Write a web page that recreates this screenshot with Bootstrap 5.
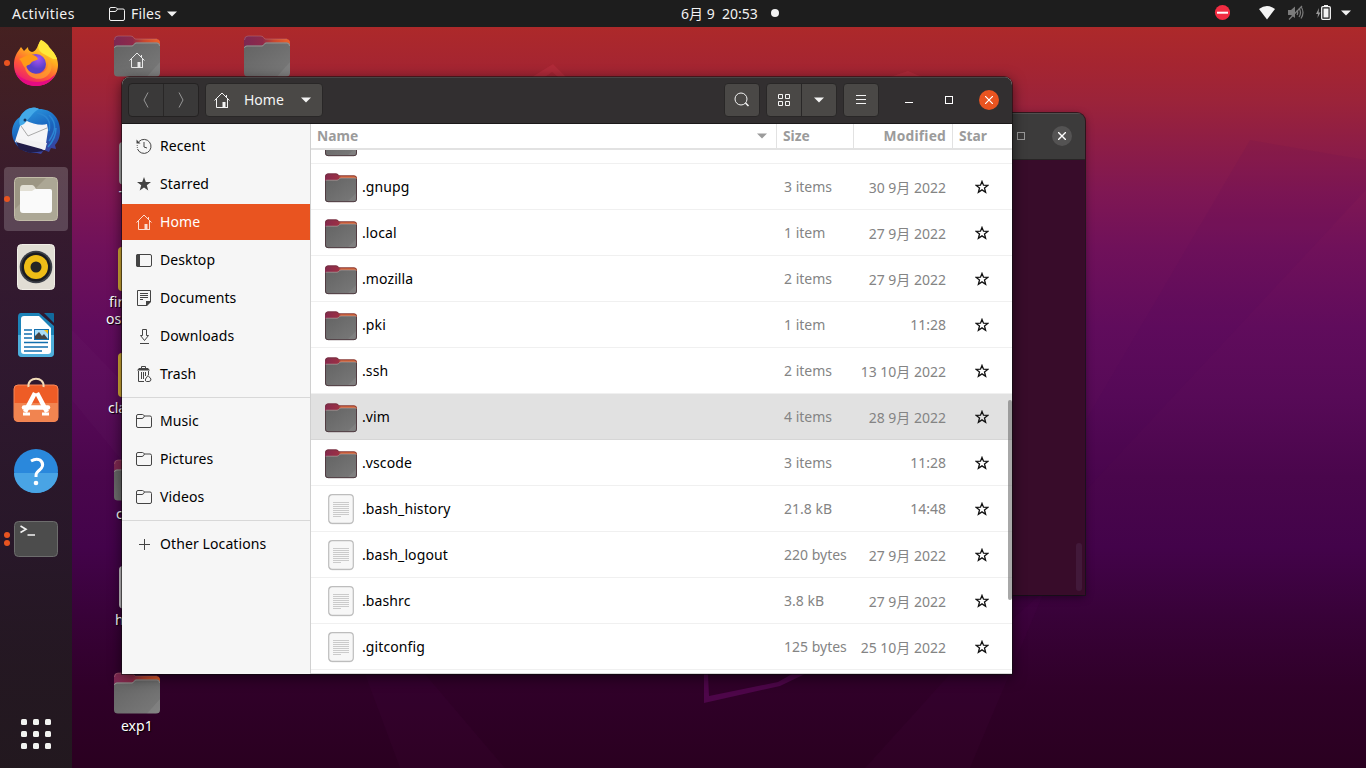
<!DOCTYPE html>
<html lang="en">
<head>
<meta charset="utf-8">
<title>Home</title>
<meta name="viewport" content="width=device-width, initial-scale=1">
<link href="https://cdn.jsdelivr.net/npm/bootstrap@5.3.0/dist/css/bootstrap.min.css" rel="stylesheet">
<style>
body{font-family:"Noto Sans","Noto Sans CJK JP",sans-serif;font-size:14px;line-height:20px;color:#111;height:768px;background:#2c001e}
svg{display:block;flex:none}
.topbar{height:27px;background:#1d1d1d;color:#f2f2f2;flex:none}
.topbar .clock{left:681px;top:4px}
.topbar .first{margin-left:12px;letter-spacing:.45px}
.desk{background:linear-gradient(180deg,#ad292a 0,#a52531 38px,#9b233a 75px,#8b1c48 125px,#7f1753 165px,#70115a 220px,#600c5c 300px,#570a57 370px,#4a064c 450px,#43034a 520px,#380238 590px,#300029 660px,#2a0020 741px)}
.dock{width:72px;background:linear-gradient(180deg,rgba(29,29,29,.72),rgba(32,29,32,.74) 50%,rgba(33,29,31,.84));gap:4px;padding:4px;z-index:1}
.dock-item{width:64px;height:64px;border-radius:4px}
.dock-item.on{background:rgba(255,255,255,.19)}
.pip{width:6px;height:6px;border-radius:50%;background:#e95420}
.pips{left:0;top:0;height:64px;width:6px;gap:2.5px}
.wall{left:0;top:0}
.icon-slot{position:absolute;color:#fff;text-shadow:1px 1px 1px #000;line-height:17px}
.win{position:absolute;border-radius:8px 8px 0 0;overflow:hidden}
.term{left:277px;top:86px;width:736px;height:482px;background:#380c2a;box-shadow:0 2px 9px rgba(0,0,0,.45),0 0 0 1px rgba(25,25,25,.75)}
.term-head{height:47px;background:#3c3b3b;border-bottom:1px solid #272525;box-shadow:inset 0 1px #504e4e;padding-right:13px;gap:25px}
.round-x{width:20px;height:20px;border-radius:50%;background:#545353}
.thumb-dark{right:3px;bottom:4px;width:6px;height:48px;border-radius:3px;background:#42193a}
.files{left:50px;top:50px;width:890px;height:597px;background:#fff;box-shadow:0 3px 14px rgba(0,0,0,.6),0 0 0 1px rgba(20,20,20,.55)}
.files-head{height:47px;background:#322f30;border-bottom:1px solid #1b191a;box-shadow:inset 0 1px #474445;padding:0 13px 0 6px;color:#f4f4f4}
.tool{height:34px;background:#4a4846;border-radius:4px;border:1px solid #292727}
.tool.off{background:#3a3939;border-color:#242222}
.tool .split{border-left:1px solid #292727}
.side{width:189px;background:#f6f6f6;border-right:1px solid #d0d0d0;padding-top:4px}
.side-item{height:36px;margin-bottom:2px;padding-left:14px;gap:8px;color:#000;letter-spacing:.1px}
.side-item svg{color:#444}
.side-item.on{background:#e95420;color:#fff}
.side-item.on svg{color:#fbdccf}
.side-line{height:1px;background:#d8d8d8;margin:5px 0}
.heads{height:26px;border-bottom:2px solid #e2e2e2;font-weight:700;color:#9b9b9b;flex:none;font-size:13.8px;line-height:24px}
.heads>div,.entry>div{flex:none}
.c-name{width:465px}.c-size{width:77px}.c-mod{width:99px}.c-star{width:60px}
.heads .c-size,.heads .c-mod,.heads .c-star{border-left:1px solid #e2e2e2}
.entry{height:46px;border-bottom:1px solid #f0f0f0}
.entry.on{background:#e1e1e1;border-color:#d6d6d6}
.entry .c-name{color:#000;letter-spacing:.1px}
.entry .c-name svg{position:relative;top:1px}
.entry .c-size,.entry .c-mod{color:#848484}
.stub{height:14px;border-bottom:1px solid #f0f0f0;overflow:hidden;flex:none}
.thumb{right:0;top:323px;width:4px;height:200px;border-radius:2px;background:rgba(110,110,110,.6)}
</style>
</head>
<body class="d-flex flex-column overflow-hidden m-0">

<svg width="0" height="0" class="position-absolute" aria-hidden="true">
<defs>
<linearGradient id="gBack"><stop offset="0" stop-color="#7c2853"/><stop offset=".4" stop-color="#8e2a4a"/><stop offset=".65" stop-color="#c8472f"/><stop offset="1" stop-color="#f0622b"/></linearGradient>
<linearGradient id="gFront" x2="1" y2="1"><stop offset="0" stop-color="#636363"/><stop offset="1" stop-color="#7a7a7a"/></linearGradient>
<linearGradient id="gBack2"><stop offset="0" stop-color="#842a4d"/><stop offset=".42" stop-color="#9b3045"/><stop offset=".5" stop-color="#d8653a"/><stop offset="1" stop-color="#e0662f"/></linearGradient>
<linearGradient id="gFx" x1=".8" y1="0" x2=".3" y2="1"><stop offset="0" stop-color="#fff44f"/><stop offset=".35" stop-color="#ffb01f"/><stop offset=".65" stop-color="#ff5a36"/><stop offset="1" stop-color="#e8107c"/></linearGradient>
<radialGradient id="gOrb" cx=".6" cy=".25"><stop offset="0" stop-color="#a855f2"/><stop offset="1" stop-color="#5a3fc8"/></radialGradient>
<linearGradient id="gTb" x1=".3" x2=".7" y1="0" y2="1"><stop offset="0" stop-color="#2b9ae0"/><stop offset=".5" stop-color="#1a63bd"/><stop offset="1" stop-color="#3c3f9b"/></linearGradient>
<symbol id="deskFolder" viewBox="0 0 46 42"><path d="M0 5Q0 1 4 1H17Q19 1 21 4H42Q46 4 46 8V20H0Z" fill="url(#gBack)"/><path d="M.5 5Q.5 1 4 1H17Q19 1 21 4H43" fill="none" stroke="#c08a8a" stroke-opacity=".6" stroke-width=".7"/><path d="M0 13Q0 10.500 3 10.500H18C20 10.500 20 7.500 22 7.500H43Q46 7.500 46 11V38Q46 41.500 42 41.500H4Q0 41.500 0 38Z" fill="url(#gFront)"/><path d="M.5 13Q.5 11 3 11H18C20 11 20 8 22 8H43Q45.500 8 45.500 11" fill="none" stroke="#a39d9d" stroke-width=".8"/><path d="M46 27V38Q46 41.500 42 41.500H33Z" fill="#fff" opacity=".07"/></symbol>
<symbol id="folder" viewBox="0 0 32 30"><path d="M0 4Q0 .5 3 .5H11Q13 .5 14 2.500H29Q32 2.500 32 5.500V14H0Z" fill="url(#gBack2)"/><path d="M.5 4Q.5 .9 3 .9H11Q13 .9 14 2.800H29Q31.500 2.800 31.500 5.500" fill="none" stroke="#6d3440" stroke-width=".8"/><path d="M0 9Q0 7 2 7H12C14 7 14 5 16 5H30Q32 5 32 7V26Q32 29 29 29H3Q0 29 0 26Z" fill="url(#gFront)"/><path d="M1 7.200H12C14 7.200 14 5 16 5H31" fill="none" stroke="#b09a98" stroke-width=".7"/><path d="M.5 8V26Q.5 28.700 3 28.700H29Q31.500 28.700 31.500 26V6" fill="none" stroke="#513c42" stroke-width="1"/><path d="M31 20V28H23Z" fill="#fff" opacity=".06"/></symbol>
<symbol id="sheet" viewBox="0 0 26 31"><rect x=".8" y="1.200" width="24.400" height="29" rx="3.500" fill="#d7d7d7"/><rect x=".7" y=".7" width="24.600" height="28.600" rx="3.500" fill="#f7f7f7" stroke="#bdbdbd" stroke-width="1.200"/><path d="M5 8.500H21M5 10.500H21M5 12.500H21M5 14.500H21M5 16.500H21M5 18.500H21M5 20.500H21M5 22.500H13" stroke="#cbcbcb"/></symbol>
<symbol id="house" viewBox="0 0 16 16"><path d="M.5 8.500 8 1l7.500 7.500M2.500 7V15.500H9M13.500 7V15.500M12.500 3V5.500" fill="none" stroke="currentColor"/><path d="M8.500 10H11.500V16H8.500Z" fill="currentColor"/><path d="M11 15.500H14" stroke="currentColor"/></symbol>
<symbol id="dir" viewBox="0 0 16 16"><path d="M.5 3Q.5 1.500 2 1.500H6.500Q7.500 1.500 8.500 3H14Q15.500 3 15.500 4.500V13Q15.500 14.500 14 14.500H2Q.5 14.500 .5 13ZM.5 5.500H6Q7.500 5.500 8.500 3" fill="none" stroke="currentColor"/></symbol>
<symbol id="starLine" viewBox="0 0 14 14"><path d="M7 1.400 8.500 5.200 12.800 5.400 9.500 8 10.600 12.300 7 9.900 3.400 12.300 4.500 8 1.200 5.400 5.500 5.200Z" fill="none" stroke="#111" stroke-width="1.300"/></symbol>
<symbol id="down" viewBox="0 0 10 6"><path d="M0 .5H10L5 5.500Z" fill="currentColor"/></symbol>
</defs>
</svg>

<header class="topbar position-relative d-flex align-items-center">
  <span class="first">Activities</span>
  <div class="position-absolute d-flex align-items-center" style="left:109px;top:4px">
    <svg width="16" height="16"><use href="#dir"/></svg><span style="margin:0 6px;letter-spacing:.2px">Files</span><svg width="10" height="6"><use href="#down"/></svg>
  </div>
  <div class="clock position-absolute d-flex align-items-center" style="white-space:pre">6月 9  20:53<svg style="margin-left:13px;margin-top:-2px" width="8" height="8"><circle cx="4" cy="4" r="4" fill="#f2f2f2"/></svg></div>
  <div class="position-absolute d-flex align-items-center" style="left:1214px;top:4px">
    <svg width="16" height="18"><circle cx="8.500" cy="8.500" r="7.600" fill="#f22c42"/><rect x="3" y="7.700" width="11" height="2" fill="#fff"/></svg>
    <svg style="margin-left:29px" width="16" height="18"><path d="M0 5Q8-.8 16 5L8 15.500Z" fill="#f4f4f4"/></svg>
    <svg style="margin-left:13px" width="16" height="18" fill="none" stroke="#7b7b7b" stroke-width="1.200"><path d="M0 6H3L7 2.500V14L3 11H0Z" fill="#7b7b7b" stroke="none"/><path d="M9 6Q10.500 8.500 9 11M11 4Q14 8.500 11 13M13 2.500Q17 8.500 13 14.500M1 15.500 14 2"/></svg>
    <svg style="margin-left:12px" width="16" height="18"><path d="M3 4 0 10H2L1.500 14 4.500 8.500H2.600Z" fill="#999"/><path d="M8 1H12V3H8Z" fill="#f4f4f4"/><rect x="5.700" y="2.700" width="8.600" height="12.600" rx="1" fill="none" stroke="#f4f4f4" stroke-width="1.300"/><rect x="7.500" y="4.500" width="5" height="9" fill="#f4f4f4"/></svg>
    <svg style="margin-left:9px" width="10" height="6"><use href="#down"/></svg>
  </div>
</header>

<main class="desk d-flex flex-grow-1 position-relative overflow-hidden">
  <svg class="wall position-absolute" width="1366" height="741" viewBox="0 27 1366 741">
    <path d="M72 330 130 390V470L72 400Z" fill="#fff" opacity=".015"/>
    <path d="M365 674H425L505 768H400ZM950 674 1045 590 970 768H865Z" fill="#8a1688" opacity=".045"/>
    <path d="M1366 160V190L1086 490V420L1250 140Z" fill="#3c0060" opacity=".05"/>
    <path d="M532 77 553 64 566 77H558L552 72 545 77ZM890 77 908 71 922 77Z" fill="#bb3040" opacity=".5"/>
    <path d="M704 674V703L780 686 805 674H792L778 682 709 696 708 674ZM780 686 781 674" fill="#4d0649"/>
  </svg>

  <nav class="dock d-flex flex-column flex-shrink-0">
    <div class="dock-item position-relative d-flex align-items-center justify-content-center">
      <div class="pips position-absolute d-flex flex-column justify-content-center"><i class="pip"></i></div>
      <svg width="46" height="48" viewBox="0 0 46 48"><path d="M28 1C33 4 34 8 37 10 42 14 45 20 45 26 45 38 35 47 23 47S1 38 1 26C1 19 3 15 6 11L8 8 11 12 15 8C15 11 16 12 19 13 24 13 25 4 28 1Z" fill="url(#gFx)"/><path d="M28 1C24 6 25 11 29 14L40 20 44 20C42 13 37 10 35 6 34 5 31 2 28 1Z" fill="#ffe83b"/><circle cx="23" cy="25" r="10" fill="url(#gOrb)"/><path d="M6 20 15 16C20 15 24 17 25 20 24 22 20 21 18 24 16 27 12 26 12 29 9 25 9 22 6 20Z" fill="#ff9a18"/><path d="M13 26C14 35 26 38 33 31 37 26 35 20 31 16 40 20 41 31 34 37 26 43 14 39 12 29Z" fill="#ffa52c" opacity=".7"/><path d="M2 32C7 43 33 49 43 34 38 45 29 47 23 47 12 47 5 41 2 32Z" fill="#e50b82"/></svg>
    </div>
    <div class="dock-item d-flex align-items-center justify-content-center">
      <svg width="50" height="50" viewBox="0 0 50 50"><path d="M9 11C13 3 21 0 28 3 41 3 49 12 49 25 49 31 47 36 44 39L45 43 40 42 38 46 33 44 30 48 26 47C13 48 2 40 1 27 1 20 4 14 9 11Z" fill="url(#gTb)"/><path d="M10 17 14 14C21 18 31 20 36 18L37 24 34 44 4 36 5 32Z" fill="#f5f5f7"/><path d="M10 20 17 30 36 22" fill="none" stroke="#aaa" stroke-width="1"/><path d="M9 11C14 3 22-1 28 3 22 6 19 12 13 18L9 20C8 17 8 14 9 11Z" fill="#43a9e8"/><circle cx="14" cy="14" r="1.500" fill="#17345c"/><path d="M5 35 8 43 19 47 33 45 26 39Z" fill="#211c48"/><path d="M5 36 8 33 36 37 34 44Z" fill="#f1f1f3"/><path d="M26 7C37 9 40 16 38 25M38 9C46 17 45 25 38 35M45 22Q45 32 37 41" fill="none" stroke="#2c86d3" stroke-width="1.500"/></svg>
    </div>
    <div class="dock-item on position-relative d-flex align-items-center justify-content-center">
      <div class="pips position-absolute d-flex flex-column justify-content-center"><i class="pip"></i></div>
      <svg width="44" height="44"><rect x=".5" y=".5" width="43" height="43" rx="4" fill="#9c9683" stroke="#c3bda9"/><path d="M1 32 32 1H43V43H1Z" fill="#b8b3a2" opacity=".6"/><path d="M6 12Q6 8 9 8H18Q20 8 22 12V16H6Z" fill="#e2dfd4"/><path d="M6 14H18L21 12H36Q38 12 38 14V33Q38 36 35 36H9Q6 36 6 33Z" fill="#fafafa"/></svg>
    </div>
    <div class="dock-item d-flex align-items-center justify-content-center">
      <svg width="38" height="46"><rect x=".5" y=".5" width="37" height="45" rx="4" fill="#e1ddd4" stroke="#f1eee7"/><circle cx="19" cy="23" r="16.300" fill="#3d4048"/><circle cx="19" cy="23" r="14.500" fill="#1b1c21"/><circle cx="19" cy="23" r="12" fill="#eebd17"/><circle cx="19" cy="23" r="5.500" fill="#252525"/></svg>
    </div>
    <div class="dock-item d-flex align-items-center justify-content-center">
      <svg width="38" height="46"><path d="M4 1H22L37 14V41Q37 45 33 45H5Q1 45 1 41V5Q1 1 4 1Z" fill="#1c83b8"/><path d="M1 23H37V41Q37 45 33 45H5Q1 45 1 41Z" fill="#4eaedb"/><path d="M27 1H36Q37 1 37 2V11Z" fill="#126a9d"/><path d="M7 4H22L34 16V39Q34 42 31 42H7Q4 42 4 39V7Q4 4 7 4Z" fill="#fff"/><path d="M7 18H15M7 22H15M7 26H15M7 30.500H31M7 35H31M7 39H25" stroke="#126fae" stroke-width="1.700"/><rect x="17.500" y="17.500" width="14" height="10" fill="#a7dcf8" stroke="#126fae"/><path d="M18 27V24L22 20 25 24 27 22 31 27Z" fill="#444"/><path d="M27 18H31V22Z" fill="#f5c21b"/></svg>
    </div>
    <div class="dock-item d-flex align-items-start justify-content-center pt-1">
      <svg style="margin-top:2px" width="46" height="46" viewBox="0 -1 46 46"><rect x="1" y="7" width="44" height="36.500" rx="4" fill="#ee5c26" stroke="#f78758"/><path d="M1 25H45V39.500Q45 43.500 41 43.500H5Q1 43.500 1 39.500Z" fill="#f18450"/><path d="M15.500 9C14-2 32-2 30.500 9" fill="none" stroke="#f2dcb8" stroke-width="2"/><path d="M22 15 12 34M24 15 34 34" fill="none" stroke="#fff" stroke-width="4.500"/><path d="M11 29.500H35" stroke="#fff" stroke-width="4.500" stroke-linecap="round"/><path d="M10 36H17M29 36H36" stroke="#fff" stroke-width="3"/></svg>
    </div>
    <div class="dock-item d-flex align-items-center justify-content-center">
      <svg width="44" height="44"><circle cx="22" cy="22" r="22" fill="#2a88dc"/><path d="M0 24H44A22 20 0 0 1 0 24" fill="#49a4e5"/><path d="M17 12Q22 9 26 11C31 15 28 19 25 21.500 22 24 22 25 22 28" fill="none" stroke="#fff" stroke-width="3"/><circle cx="22" cy="34" r="2.300" fill="#fff"/></svg>
    </div>
    <div class="dock-item position-relative d-flex align-items-center justify-content-center">
      <div class="pips position-absolute d-flex flex-column justify-content-center"><i class="pip"></i><i class="pip"></i></div>
      <svg width="44" height="36"><rect x=".5" y=".5" width="43" height="35" rx="4" fill="#4c4c4c" stroke="#6d6d6d"/><path d="M6.500 5 12 8.300 6.500 11.500M13.500 14H21" fill="none" stroke="#f2f2f2" stroke-width="1.600"/></svg>
    </div>
    <div class="dock-item mt-auto d-flex align-items-center justify-content-center" style="margin-bottom:-2px">
      <svg width="30" height="30" fill="#f2f2f0"><g id="dots"><rect width="6" height="6" rx="1.500"/><rect x="12" width="6" height="6" rx="1.500"/><rect x="24" width="6" height="6" rx="1.500"/></g><use href="#dots" y="12"/><use href="#dots" y="24"/></svg>
    </div>
  </nav>

  <section class="position-relative flex-grow-1">
    <div class="icon-slot" style="left:42px;top:8px"><svg width="46" height="42"><use href="#deskFolder"/><use href="#house" x="15" y="17" width="16" height="16" opacity=".85"/></svg></div>
    <div class="icon-slot" style="left:172px;top:8px"><svg width="46" height="42"><use href="#deskFolder"/></svg></div>
    <div class="icon-slot" style="left:47px;top:115px"><svg width="36" height="43"><rect width="36" height="42.500" rx="4" fill="#aaa"/></svg></div>
    <div class="icon-slot" style="left:47px;top:160px">T</div>
    <div class="icon-slot" style="left:46px;top:220px"><svg width="38" height="44"><rect width="38" height="44" rx="4" fill="#d8af37"/></svg></div>
    <div class="icon-slot" style="left:37px;top:266px">fir</div>
    <div class="icon-slot" style="left:34px;top:283px">os</div>
    <div class="icon-slot" style="left:46px;top:326px"><svg width="38" height="44"><rect width="38" height="44" rx="4" fill="#d8af37"/></svg></div>
    <div class="icon-slot" style="left:36px;top:372px">cla</div>
    <div class="icon-slot" style="left:42px;top:432px"><svg width="46" height="42"><use href="#deskFolder"/></svg></div>
    <div class="icon-slot" style="left:44px;top:478px">c</div>
    <div class="icon-slot" style="left:47px;top:539px"><svg width="36" height="43"><rect width="36" height="42.500" rx="4" fill="#c8c4c8"/></svg></div>
    <div class="icon-slot" style="left:43px;top:584px">h</div>
    <div class="icon-slot" style="left:42px;top:645px"><svg width="46" height="42"><use href="#deskFolder"/></svg></div>
    <div class="icon-slot" style="left:49px;top:690px">exp1</div>

    <div class="win term">
      <div class="term-head d-flex align-items-center justify-content-end">
        <svg width="9" height="9" style="margin-right:1px"><rect x=".5" y=".5" width="7" height="7" fill="none" stroke="#999"/></svg>
        <div class="round-x d-flex align-items-center justify-content-center"><svg width="8" height="8"><path d="M0 0 8 8M8 0 0 8" stroke="#fff" stroke-width="1.400"/></svg></div>
      </div>
      <div class="thumb-dark position-absolute"></div>
    </div>

    <div class="win files d-flex flex-column">
      <div class="files-head d-flex align-items-center flex-shrink-0">
        <div class="tool off d-flex align-items-stretch" style="width:71px">
          <div class="d-flex align-items-center justify-content-center flex-fill"><svg width="6" height="16"><path d="M5 .5 1 8 5 15.500" fill="none" stroke="#969696"/></svg></div>
          <div class="split d-flex align-items-center justify-content-center flex-fill"><svg width="6" height="16"><path d="M1 .5 5 8 1 15.500" fill="none" stroke="#969696"/></svg></div>
        </div>
        <div class="tool d-flex align-items-center" style="width:118px;margin-left:6px;padding-left:8px">
          <svg width="16" height="16"><use href="#house"/></svg><span style="margin-left:14px;width:41px">Home</span><svg class="ms-3" width="10" height="6"><use href="#down"/></svg>
        </div>
        <div class="tool ms-auto d-flex align-items-center justify-content-center" style="width:36px"><svg width="16" height="16"><circle cx="7" cy="7" r="6" fill="none" stroke="#f4f4f4"/><path d="M11.500 11 14.500 14" stroke="#f4f4f4" stroke-width="1.600"/></svg></div>
        <div class="tool d-flex" style="width:71px;margin-left:6px">
          <div class="d-flex align-items-center justify-content-center" style="width:34px"><svg width="12" height="12" fill="none" stroke="#f4f4f4"><path d="M.5.5H4.500V4.500H.5ZM7.500.5H11.500V4.500H7.500ZM.5 7.500H4.500V11.500H.5ZM7.500 7.500H11.500V11.500H7.500Z"/></svg></div>
          <div class="split flex-fill d-flex align-items-center justify-content-center"><svg width="10" height="6"><use href="#down"/></svg></div>
        </div>
        <div class="tool d-flex align-items-center justify-content-center" style="width:36px;margin-left:6px"><svg width="10" height="10"><path d="M0 .5H10M0 4.500H10M0 8.500H10" stroke="#f4f4f4"/></svg></div>
        <svg style="margin-left:26px" width="8" height="8"><path d="M0 6.500H8" stroke="#fff"/></svg>
        <svg style="margin-left:32px" width="8" height="8"><rect x=".5" y=".5" width="7" height="7" fill="none" stroke="#fff"/></svg>
        <div class="round-x d-flex align-items-center justify-content-center" style="margin-left:26px;background:#e95420"><svg width="8" height="8"><path d="M0 0 8 8M8 0 0 8" stroke="#fff" stroke-width="1.200"/></svg></div>
      </div>

      <div class="d-flex flex-grow-1 overflow-hidden">
        <div class="side flex-shrink-0">
          <div class="side-item d-flex align-items-center"><svg width="16" height="16" fill="none" stroke="currentColor"><path d="M3 3.500A7 7 0 1 1 1.500 11" /><path d="M1.500 10Q1 8.500 1.300 7" stroke-dasharray="1 1"/><path d="M8 4V9L11 10"/><path d="M.5 1.500V5.500H4.500Z" fill="currentColor" stroke="none"/></svg>Recent</div>
          <div class="side-item d-flex align-items-center"><svg width="16" height="16"><path d="M8 1 9.800 6H15L10.800 9.200 12.300 14.500 8 11.400 3.700 14.500 5.200 9.200 1 6H6.200Z" fill="currentColor"/></svg>Starred</div>
          <div class="side-item on d-flex align-items-center"><svg width="16" height="16"><use href="#house"/></svg>Home</div>
          <div class="side-item d-flex align-items-center"><svg width="16" height="16"><rect x=".5" y="2.500" width="15" height="12" rx="1.500" fill="none" stroke="currentColor"/><path d="M0 4Q0 2 2 2H4V15H2Q0 15 0 13Z" fill="currentColor"/></svg>Desktop</div>
          <div class="side-item d-flex align-items-center"><svg width="16" height="16" fill="none" stroke="currentColor"><path d="M1.500.5H14.500V11L10.500 15.500H1.500ZM4 3.500H12M4 5.500H12M4 7.500H12M4 9.500H7"/><path d="M15 11V12L11 16H10V11Z" fill="currentColor" stroke="none"/></svg>Documents</div>
          <div class="side-item d-flex align-items-center"><svg width="16" height="16" fill="none" stroke="currentColor"><path d="M6.500 1.500H10.500V7.500H12.500L8.500 12.500 4.500 7.500H6.500ZM4 15.500H13"/></svg>Downloads</div>
          <div class="side-item d-flex align-items-center"><svg width="16" height="16" fill="none" stroke="currentColor"><path d="M5.500 2V.5H9.500V2M2.500 5V15.500H8M5.500 6V13M7.500 6V13M9.500 6V10M12.500 5V9"/><path d="M1 4.500 3 2H12L14 4.500Z" fill="currentColor" stroke="none"/><path d="M12 9.500 15 13Q15 15.500 13 15.500H10.500Q9 15.500 9.500 13Z"/></svg>Trash</div>
          <div class="side-line"></div>
          <div class="side-item d-flex align-items-center"><svg width="16" height="16"><use href="#dir"/></svg>Music</div>
          <div class="side-item d-flex align-items-center"><svg width="16" height="16"><use href="#dir"/></svg>Pictures</div>
          <div class="side-item d-flex align-items-center"><svg width="16" height="16"><use href="#dir"/></svg>Videos</div>
          <div class="side-line"></div>
          <div class="side-item d-flex align-items-center"><svg width="16" height="16"><path d="M3 8.500H14M8.500 3V14" stroke="currentColor"/></svg>Other Locations</div>
        </div>

        <div class="d-flex flex-column flex-grow-1 overflow-hidden">
          <div class="heads d-flex">
            <div class="c-name d-flex align-items-center justify-content-between" style="padding:0 9px 0 6px">Name<svg width="10" height="6"><use href="#down"/></svg></div>
            <div class="c-size" style="padding-left:6px">Size</div>
            <div class="c-mod text-end" style="padding-right:6px;letter-spacing:.2px">Modified</div>
            <div class="c-star" style="padding-left:6px">Star</div>
          </div>
          <div class="stub"><svg style="margin:-23px 0 0 14px" width="32" height="30"><use href="#folder"/></svg></div>
          <div id="entries"></div>
        </div>
      </div>
      <div class="thumb position-absolute"></div>
      <div class="position-absolute bottom-0 end-0" style="width:701px;height:1px;background:#d8d8d8"></div>
    </div>
  </section>
</main>

<script>
const entries = [
  ['.gnupg','3 items','30 9月 2022','folder'],
  ['.local','1 item','27 9月 2022','folder'],
  ['.mozilla','2 items','27 9月 2022','folder'],
  ['.pki','1 item','11:28','folder'],
  ['.ssh','2 items','13 10月 2022','folder'],
  ['.vim','4 items','28 9月 2022','folder','on'],
  ['.vscode','3 items','11:28','folder'],
  ['.bash_history','21.8 kB','14:48','sheet'],
  ['.bash_logout','220 bytes','27 9月 2022','sheet'],
  ['.bashrc','3.8 kB','27 9月 2022','sheet'],
  ['.gitconfig','125 bytes','25 10月 2022','sheet']
];
document.getElementById('entries').innerHTML = entries.map(([name, size, date, kind, on]) => `
  <div class="entry d-flex align-items-center ${on || ''}">
    <div class="c-name d-flex align-items-center" style="padding-left:14px">
      <div class="d-flex justify-content-center" style="width:32px;margin-right:5px">
        <svg width="${kind === 'folder' ? 32 : 26}" height="${kind === 'folder' ? 30 : 31}"><use href="#${kind}"/></svg>
      </div>${name}
    </div>
    <div class="c-size text-nowrap" style="padding-left:8px">${size}</div>
    <div class="c-mod text-end text-nowrap" style="padding-right:6px;padding-top:${date.includes('月') ? 2 : 0}px">${date}</div>
    <div class="c-star d-flex justify-content-center"><svg width="14" height="14"><use href="#starLine"/></svg></div>
  </div>`).join('');
</script>
<script src="https://cdn.jsdelivr.net/npm/bootstrap@5.3.0/dist/js/bootstrap.bundle.min.js"></script>
</body>
</html>
